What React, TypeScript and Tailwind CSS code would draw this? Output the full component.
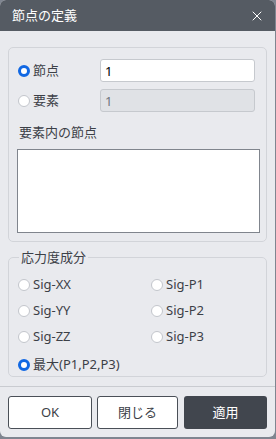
import { X } from "lucide-react";

const font = { fontFamily: '"Noto Sans", "Noto Sans CJK JP", sans-serif' };

function Radio({ checked, label }: { checked?: boolean; label: string }) {
  return (
    <label className="flex items-center gap-[3px] text-[13px] text-[#3c4047]">
      <span
        className={
          checked
            ? "h-[12px] w-[12px] rounded-full border-[3.5px] border-[#1168e3] bg-white"
            : "h-[12px] w-[12px] rounded-full border border-[#c3c6cc] bg-white"
        }
      />
      <span>{label}</span>
    </label>
  );
}

export default function App() {
  return (
    <div className="h-[439px] w-[276px] bg-[#7f8590]" style={font}>
      <div className="flex h-[437px] w-[275px] flex-col overflow-hidden rounded-[6px] bg-[#e9eaee]">
        <div className="flex h-[31px] items-center justify-between bg-[#555b63] pl-[12px] pr-[10px] text-[13px] text-white">
          <span>節点の定義</span>
          <X size={16} strokeWidth={1.5} />
        </div>

        <div className="px-[8px] pt-[16px]">
          <div className="flex h-[195px] flex-col rounded-[5px] border border-[#d2d4d9] px-[8px] pt-[11px]">
            <div className="flex items-center">
              <div className="w-[83px] pl-[1px]">
                <Radio checked label="節点" />
              </div>
              <input
                defaultValue="1"
                className="h-[23px] w-[155px] rounded-[3px] border border-[#c6c9ce] bg-white px-[4px] text-[13px] text-black outline-none"
              />
            </div>
            <div className="mt-[7px] flex items-center">
              <div className="w-[83px] pl-[1px]">
                <Radio label="要素" />
              </div>
              <input
                disabled
                defaultValue="1"
                className="h-[23px] w-[155px] rounded-[3px] border border-[#c6c9ce] bg-[#e0e2e6] px-[4px] text-[13px] text-[#70747b] outline-none"
              />
            </div>
            <div className="mt-[11px] pl-[2px] text-[13px] text-[#3c4047]">要素内の節点</div>
            <textarea className="mt-[6px] h-[84px] w-[243px] resize-none border border-[#80858d] bg-white outline-none" />
          </div>

          <fieldset className="mt-[7px] h-[128px] rounded-[5px] border border-[#d2d4d9] px-[9px]">
            <legend className="ml-[1px] px-[2px] text-[13px] leading-[16px] text-[#3c4047]">応力度成分</legend>
            <div className="mt-[10px] grid grid-cols-[133px_1fr] gap-y-[8px]">
              <div className="h-[18px]"><Radio label="Sig-XX" /></div>
              <div className="h-[18px]"><Radio label="Sig-P1" /></div>
              <div className="h-[18px]"><Radio label="Sig-YY" /></div>
              <div className="h-[18px]"><Radio label="Sig-P2" /></div>
              <div className="h-[18px]"><Radio label="Sig-ZZ" /></div>
              <div className="h-[18px]"><Radio label="Sig-P3" /></div>
              <div className="col-span-2 mt-[2px] h-[18px]"><Radio checked label="最大(P1,P2,P3)" /></div>
            </div>
          </fieldset>
        </div>

        <div className="mt-[9px] border-t border-[#c9cbd0]" />

        <div className="flex gap-[5px] px-[8px] pt-[9px]">
          <button className="h-[33px] w-[84px] rounded-[3px] border border-[#4a4f57] bg-white text-[13px] text-[#3c4047]">OK</button>
          <button className="h-[33px] w-[81px] rounded-[3px] border border-[#4a4f57] bg-white text-[13px] text-[#3c4047]">閉じる</button>
          <button className="ml-[1px] h-[33px] flex-1 rounded-[3px] bg-[#41464e] text-[13px] text-white">適用</button>
        </div>
      </div>
    </div>
  );
}
